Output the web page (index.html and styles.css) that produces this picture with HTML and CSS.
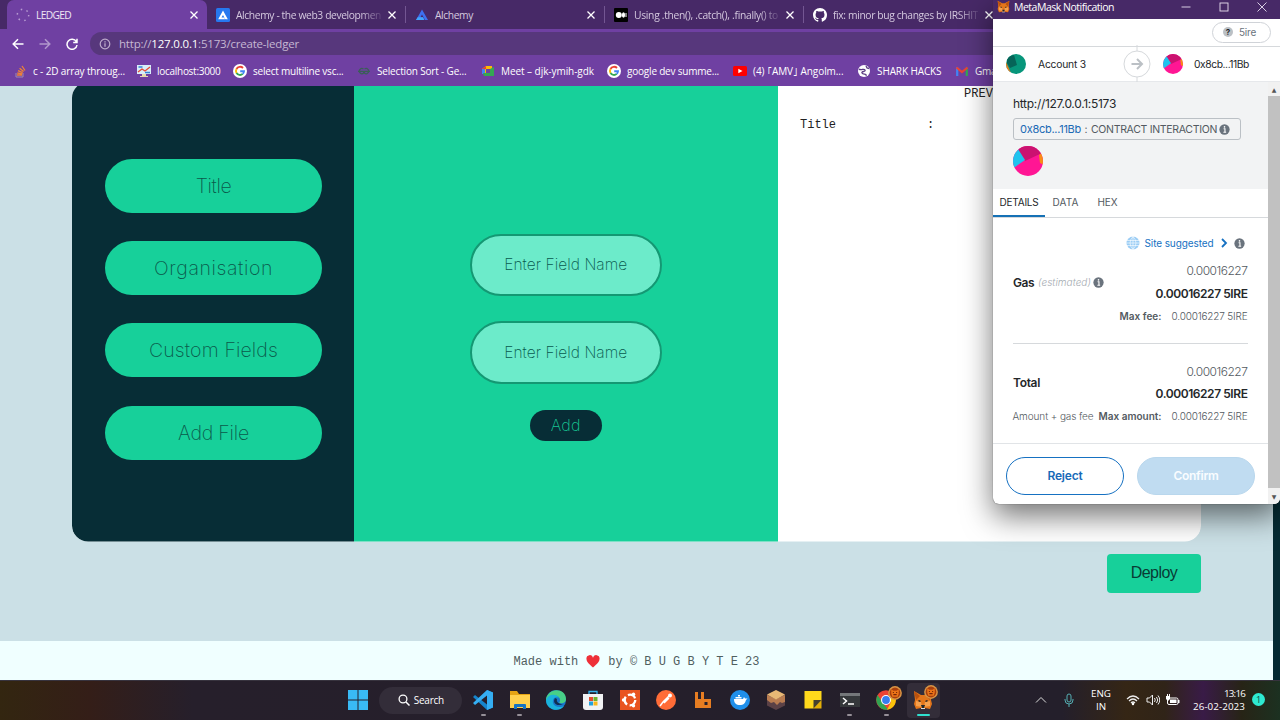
FILE: index.html
```html
<!DOCTYPE html>
<html lang="en">
<head>
<meta charset="utf-8">
<title>LEDGED</title>
<link rel="stylesheet" href="styles.css">
</head>
<body>
<svg class="defs" width="0" height="0">
  <symbol id="x" viewBox="0 0 10 10"><path d="M1.500 1.500l7 7M8.500 1.500l-7 7" stroke="currentColor" stroke-width="1.300"/></symbol>
  <symbol id="info" viewBox="0 0 12 12"><circle cx="6" cy="6" r="5.600" fill="#6a737d"/><path d="M5 5.200h1.500V9M4.800 9h3" stroke="#fff" stroke-width="1.200" fill="none"/><circle cx="6" cy="3.200" r=".9" fill="#fff"/></symbol>
  <symbol id="google" viewBox="0 0 14 14"><circle cx="7" cy="7" r="7" fill="#fff"/><g fill="none" stroke-width="1.900"><path d="M10 4A4.100 4.100 0 0 0 3.500 5" stroke="#ea4335"/><path d="M3.500 5a4.200 4.200 0 0 0 0 4.100" stroke="#fbbc05"/><path d="M3.500 9a4.100 4.100 0 0 0 6.200.9" stroke="#34a853"/><path d="M9.700 9.900A4 4 0 0 0 11 7.200H7.200" stroke="#4285f4"/></g></symbol>
  <symbol id="jazz" viewBox="0 0 30 30"><clipPath id="c"><circle cx="15" cy="15" r="15"/></clipPath><g clip-path="url(#c)"><path fill="#ff1694" d="M0 0h30v30H0z"/><path fill="#cb1270" d="M3 0h26v7L12 15 5 5z"/><path fill="#1fc3ee" d="M0 3h5l7 11-10 7-4 1z"/><path fill="#f98b15" d="M26 9l5-4v14l-4-2z"/></g></symbol>
  <symbol id="fox" viewBox="0 0 20 20"><path fill="#e4761b" d="M1 1l7 4h4l7-4-1 9 1 4-2 5-5-1H8l-5 1-2-5 1-4z"/><path fill="#f6a04d" d="M3 11l5 1 1 5-6-1zM17 11l-5 1-1 5 6-1z"/><path fill="#b9510e" d="M1 1l6 5-4 4zM19 1l-6 5 4 4z"/><path fill="#24272a" d="M8 15h4l-1 3H9zM5 11l2 1 1-1-2-1zM15 11l-2 1-1-1 2-1z"/><path fill="#ddd" d="M8 18h4v1H8z"/></symbol>
  <symbol id="badge" viewBox="0 0 13 13"><circle cx="6.500" cy="6.500" r="6.400" fill="#d99445"/><circle cx="6.500" cy="6.500" r="5" fill="#a93f0d"/><path d="M3 3l2 1.500h3L10 3v4l-1 3H4L3 7z" fill="#ec7418"/><path d="M5 8h3M4.500 6h1M7.500 6h1" stroke="#70250b"/></symbol>
</svg>

<div class="desktop">
  <header class="browser">
    <div class="tabs">
      <div class="tab active"><svg class="fav" viewBox="0 0 14 14"><circle cx="7" cy="7" r="5.700" fill="none" stroke="#b79bd1" stroke-width="1.500" stroke-dasharray="1.500 4.470"/></svg><span class="tab-name"><span data-w="35">LEDGED</span></span><svg class="close"><use href="#x"/></svg></div>
      <div class="tab"><svg class="fav" viewBox="0 0 14 14"><rect width="14" height="14" rx="1.500" fill="#2678ef"/><path d="M7 2.500l4.800 8.700H9.300L7 7 5.500 9.500h2.700L9 11.200H2.200z" fill="#fff"/></svg><span class="tab-name fade"><span data-w="145">Alchemy - the web3 developmen</span></span><svg class="close"><use href="#x"/></svg></div>
      <div class="tab"><svg class="fav" viewBox="0 0 14 14"><path d="M7 1.500l6 10.500h-3L7 6.500 5.500 9.300H8L9.300 12H1z" fill="#3e70f0"/><path d="M1 12l1.700-2.700H8L9.300 12z" fill="#42a5fb"/></svg><span class="tab-name"><span data-w="38">Alchemy</span></span><svg class="close"><use href="#x"/></svg></div>
      <div class="tab"><svg class="fav" viewBox="0 0 14 14"><rect width="14" height="14" rx="1" fill="#000"/><circle cx="4.800" cy="7" r="3" fill="#fff"/><ellipse cx="9.500" cy="7" rx="1.600" ry="2.700" fill="#fff"/><rect x="11.500" y="5" width="1" height="4" fill="#fff"/></svg><span class="tab-name fade"><span data-w="144">Using .then(), .catch(), .finally() to</span></span><svg class="close"><use href="#x"/></svg></div>
      <div class="tab"><svg class="fav" viewBox="0 0 16 16"><path fill="#fff" d="M8 0C3.580 0 0 3.580 0 8c0 3.540 2.290 6.530 5.470 7.590.4.070.55-.17.55-.38v-1.490c-2.010.37-2.530-.49-2.690-.94-.09-.23-.48-.94-.82-1.130-.28-.15-.68-.52-.01-.53.63-.01 1.080.58 1.230.82.72 1.210 1.870.87 2.330.66.07-.52.28-.87.51-1.070-1.780-.2-3.640-.89-3.640-3.950 0-.87.31-1.590.82-2.150-.08-.2-.36-1.020.08-2.120 0 0 .67-.21 2.200.82a7.700 7.700 0 0 1 4 0c1.530-1.040 2.200-.82 2.200-.82.44 1.100.16 1.920.08 2.120.51.56.82 1.270.82 2.150 0 3.070-1.870 3.750-3.650 3.950.29.25.54.73.54 1.480v2.190c0 .21.15.46.55.38A8 8 0 0 0 16 8c0-4.420-3.580-8-8-8z"/></svg><span class="tab-name fade"><span data-w="145">fix: minor bug changes by IRSHIT</span></span><svg class="close"><use href="#x"/></svg></div>
    </div>
    <div class="toolbar">
      <svg class="nav" viewBox="0 0 12 12"><path d="M11.500 6H1.500M6 1.200L1.200 6 6 10.800"/></svg>
      <svg class="nav dim" viewBox="0 0 12 12"><path d="M.5 6h10M6 1.200L10.800 6 6 10.800"/></svg>
      <svg class="nav" viewBox="0 0 12 12"><path d="M10.300 3.700A5 5 0 1 0 11 7M11 .7v3.800H7.200"/></svg>
      <div class="omnibox"><svg viewBox="0 0 12 12"><circle cx="6" cy="6" r="4.800" fill="none" stroke="#bdaacb" stroke-width="1.200"/><path d="M6 5.300v3.400M6 3.200v1.300" stroke="#bdaacb" stroke-width="1.300"/></svg><span class="url" data-w="180">http://<b>127.0.0.1</b>:5173/create-ledger</span></div>
    </div>
    <nav class="bookmarks">
      <div class="bm w123"><svg viewBox="0 0 14 14"><path d="M3 9v4h7V9" fill="none" stroke="#a18aae"/><path d="M4 11h5M4.300 9l5 .8M5 6.700l4.700 2M6.600 4.300l4 3.300M9 2l3 4.500" stroke="#ef8236" stroke-width="1.300"/></svg><span data-w="92">c - 2D array throug...</span></div>
      <div class="bm w96"><svg viewBox="0 0 14 14"><path d="M0 1h14v9H0z" fill="#d9eef9"/><path d="M1 8l4-3 3 2 5-4" stroke="#e34c35" stroke-width="1.300" fill="none"/><path d="M1.500 3h4M8 8.500h5" stroke="#3285d7" stroke-width="1.600"/><path d="M5 10h4v2H5zM3 12h8v1H3z" fill="#e5dcae"/></svg><span data-w="63.500">localhost:3000</span></div>
      <div class="bm w124"><svg><use href="#google"/></svg><span data-w="90.500">select multiline vsc...</span></div>
      <div class="bm w124"><svg viewBox="0 0 14 14"><path d="M6.500 5A2.600 2.600 0 1 0 6.500 9.200V7.300H1M7.500 5a2.600 2.600 0 1 1 0 4.200V7.300H13" fill="none" stroke="#3b5e58" stroke-width="1.300"/></svg><span data-w="89.500">Selection Sort - Ge...</span></div>
      <div class="bm w126"><svg viewBox="0 0 14 14"><path d="M1 5l4-3h6v3H5v5H1z" fill="#fbbc05"/><path d="M1 5l4-3v3z" fill="#ea4335"/><path d="M1 5h3v5H1z" fill="#4285f4"/><path d="M2 9h7V5l4-2v9H3z" fill="#34a853"/></svg><span data-w="93">Meet – djk-ymih-gdk</span></div>
      <div class="bm w126"><svg><use href="#google"/></svg><span data-w="92">google dev summe...</span></div>
      <div class="bm w124"><svg viewBox="0 0 14 14"><rect y="2" width="14" height="10" rx="1.500" fill="#f00"/><path d="M5.300 4.700v4.600L9.500 7z" fill="#fff"/></svg><span data-w="90.500">(4) ｢AMV｣ Angolm...</span></div>
      <div class="bm w98"><svg viewBox="0 0 14 14"><circle cx="7" cy="7" r="6" fill="#fff"/><path d="M2 5c2 2 5-1 6 1s-4 1-3 3 5 0 4 3" fill="none" stroke="#5c3c83" stroke-width="1.300"/><path d="M9 2l1 2 2 .5" stroke="#5c3c83" stroke-width="1.300" fill="none"/></svg><span data-w="64.500">SHARK HACKS</span></div>
      <div class="bm"><svg viewBox="0 0 14 14"><path d="M2.200 12V3.500" stroke="#4285f4" stroke-width="2.200"/><path d="M11.800 12V3.500" stroke="#34a853" stroke-width="2.200"/><path d="M1.500 3.500L7 8l5.500-4.500" fill="none" stroke="#ea4335" stroke-width="2.200"/></svg><span data-w="26">Gmail</span></div>
    </nav>
  </header>

  <main class="viewport">
    <div class="page">
      <section class="builder">
        <aside class="sidebar">
          <button><span data-w="35.500">Title</span></button>
          <button><span data-w="119">Organisation</span></button>
          <button><span data-w="129">Custom Fields</span></button>
          <button><span data-w="71">Add File</span></button>
        </aside>
        <div class="fields">
          <div class="field"><span data-w="123">Enter Field Name</span></div>
          <div class="field"><span data-w="123">Enter Field Name</span></div>
          <button class="add"><span data-w="30">Add</span></button>
        </div>
        <div class="preview">
          <h2>PREVIEW</h2>
          <div class="row"><span>Title</span><span>:</span></div>
        </div>
      </section>
      <div class="actions"><button class="deploy"><span data-w="46.500">Deploy</span></button></div>
      <footer class="credit"><span>Made with</span><svg viewBox="0 0 14 13"><path d="M7 12.500C3 9 .5 7 .5 4A3.300 3.300 0 0 1 7 2.800 3.300 3.300 0 0 1 13.500 4c0 3-2.500 5-6.500 8.500z" fill="#ee3038"/></svg><span>by © B U G B Y T E 23</span></footer>
    </div>
    <div class="page-scroll"></div>
  </main>

  <footer class="taskbar">
    <div class="dock">
      <div class="task"><svg viewBox="0 0 20 20"><path fill="#39baf5" d="M0 0h9.500v9.500H0zM10.500 0H20v9.500h-9.500zM0 10.500h9.500V20H0zM10.500 10.500H20V20h-9.500z"/></svg></div>
      <div class="search"><svg viewBox="0 0 12 12"><circle cx="5" cy="5" r="3.900" fill="none" stroke="#fff" stroke-width="1.300"/><path d="M8 8l3.500 3.500" stroke="#fff" stroke-width="1.500"/></svg><span data-w="30">Search</span></div>
      <div class="task run"><svg viewBox="0 0 20 20"><path fill="#1685cc" d="M14 0l6 2.500v15L14 20 0 7l2-2 12 9.500z"/><path fill="#35aef3" d="M14 0l6 2.500v15L14 20V5.500L2 15l-2-2z"/></svg></div>
      <div class="task run"><svg viewBox="0 0 20 20"><path fill="#e5a313" d="M0 1h7l2 3h11v3H0z"/><path fill="#ffd04d" d="M0 5h20v13H0z"/><path fill="#1673c2" d="M4 19v-4q0-1 1-1h10q1 0 1 1v4h-3v-2H7v2z"/></svg></div>
      <div class="task"><svg viewBox="0 0 20 20"><circle cx="10" cy="10" r="10" fill="#1878cb"/><path fill="#48cf87" d="M2 4.500C8-3 20 0 20 9c0 4-4 5-7 4 3-4-1-8-5-7-4 0-7 3-8 5 0-3 0-4 2-6.500z"/><path fill="#1ab2dc" d="M0 10c2-6 10-7 13-2-4-2-7 1-6 5 1 4 7 5 11 3-5 7-18 4-18-6z"/><path fill="#102f50" d="M9 8c-3 5 2 9 8 6-4 0-7-2-6-5z"/></svg></div>
      <div class="task"><svg viewBox="0 0 20 20"><path d="M6 5V1.500h8V5" fill="none" stroke="#35b3ee" stroke-width="1.300"/><path fill="#f1f2f4" d="M0 4h20v13q0 3-3 3H3q-3 0-3-3z"/><path fill="#e34b2f" d="M6 7h4v4H6z"/><path fill="#68b32e" d="M10.500 7h4v4h-4z"/><path fill="#21a1dd" d="M6 11.500h4v4H6z"/><path fill="#f8b81c" d="M10.500 11.500h4v4h-4z"/></svg></div>
      <div class="task"><svg viewBox="0 0 20 20"><path fill="#e95420" d="M0 0h20v20H0z"/><circle cx="10" cy="10" r="5.300" fill="none" stroke="#fff" stroke-width="2.300" stroke-dasharray="8.500 2.600"/><circle cx="3.500" cy="10" r="1.700" fill="#fff"/><circle cx="13.500" cy="4.200" r="1.700" fill="#fff"/><circle cx="13.500" cy="15.800" r="1.700" fill="#fff"/></svg></div>
      <div class="task"><svg viewBox="0 0 20 20"><circle cx="10" cy="10" r="10" fill="#ff6c37"/><path d="M4 16l3-4 6-6M8 13l5-5" stroke="#fff" stroke-width="1.500"/><circle cx="14" cy="5.500" r="2" fill="#fff"/></svg></div>
      <div class="task"><svg viewBox="0 0 20 20"><path fill="#e67d22" d="M2 2h3v7h3V2h3v7h7v9H2z"/><path fill="#241f2b" d="M11.500 12h3v3h-3z"/></svg></div>
      <div class="task"><svg viewBox="0 0 20 20"><circle cx="10" cy="10" r="10" fill="#1f8fea"/><path fill="#fff" d="M4 9h9l1-2 1 1.500h2.500L16 10c-1 4-3 5-6 5-4 0-6-2-6-6zM5.500 7h6v1.500h-6zM8 5h2v1.500H8z"/></svg></div>
      <div class="task"><svg viewBox="0 0 20 20"><path fill="#5b4146" d="M1 5h18v10.500L10 20l-9-4.500z"/><path fill="#b97c50" d="M1 5l9 4 9-4v7l-3 1-2-1-3 3-3-3-3 1-4-3z"/><path fill="#e8b875" d="M10 0l9 4.500-9 5-9-5z"/></svg></div>
      <div class="task"><svg viewBox="0 0 20 20"><path fill="#ffd91c" d="M1.500 1h17v9l-8 8.500h-9z"/><path fill="#45412e" d="M10.500 18.500V10h8z"/><path fill="#e3af08" d="M10.500 18.500l8-8.500v8.500z"/></svg></div>
      <div class="task run"><svg viewBox="0 0 20 20"><path fill="#35383b" d="M0 3h20v14H0z"/><path fill="#74777a" d="M0 3h20v3H0z"/><path d="M3 8l3.500 3L3 14M8 14h6" fill="none" stroke="#fff" stroke-width="1.500"/></svg></div>
      <div class="task run"><svg viewBox="0 0 20 20"><circle cx="10" cy="10" r="9.800" fill="#eb4335"/><path fill="#31a451" d="M1.500 5l5.500 8 5 6.500A10 10 0 0 1 1.500 5z"/><path fill="#fac30b" d="M10 6h9a9.800 9.800 0 0 1-8 13.800L15 12z"/><circle cx="10" cy="10" r="5" fill="#fff"/><circle cx="10" cy="10" r="3.900" fill="#367df0"/></svg><svg class="badge"><use href="#badge"/></svg></div>
      <div class="task run current"><svg><use href="#fox"/></svg><svg class="badge"><use href="#badge"/></svg></div>
    </div>
    <div class="tray">
      <svg class="up" viewBox="0 0 12 8"><path d="M1 6.500l5-5 5 5" fill="none" stroke="#ddd"/></svg>
      <svg class="mic" viewBox="0 0 10 14"><rect x="3" y="1" width="4" height="8" rx="2" fill="none" stroke="#55aeb3"/><path d="M1 6v1q0 4 4 4t4-4V6M5 11v3" fill="none" stroke="#55aeb3"/></svg>
      <div class="lang"><span data-w="20">ENG</span><span>IN</span></div>
      <svg class="wifi" viewBox="0 0 14 12"><g fill="none" stroke="#eee" stroke-width="1.200"><path d="M1 5q6-6 12 0M3 7q4-4 8 0M5 9q2-2 4 0"/></g><circle cx="7" cy="10" r="1.200" fill="#fff"/></svg>
      <svg class="vol" viewBox="0 0 14 12"><g fill="none" stroke="#eee"><path d="M1 4h2.500L6.500 1v10l-3-3H1zM8.500 4q1.500 2 0 4M10.500 3q2.500 3 0 6M12 1.500q3.500 4.500 0 9"/></g></svg>
      <svg class="bat" viewBox="0 0 14 12"><rect x="1.500" y="4" width="10.500" height="6.500" rx="1.500" fill="none" stroke="#fff"/><path fill="#fff" d="M4 5.500h6.500V9H4zM12 6h1.500v3H12zM0 2h4v3L2 7 0 5zM1 0h1v2H1zM3 0h1v2H3z"/></svg>
      <div class="clock"><span data-w="21">13:16</span><span data-w="52">26-02-2023</span></div>
      <span class="count">1</span>
    </div>
  </footer>

  <section class="wallet">
    <div class="w-title"><svg class="w-fox"><use href="#fox"/></svg><span class="w-name" data-w="100">MetaMask Notification</span><svg class="w-ctl" viewBox="0 0 10 10"><path d="M.5 5h9"/></svg><svg class="w-ctl" viewBox="0 0 10 10"><rect x="1" y="1" width="8" height="8"/></svg><svg class="w-ctl" viewBox="0 0 10 10"><path d="M.5.5l9 9M9.500.5l-9 9"/></svg></div>
    <div class="w-net"><div class="net"><i>?</i><span data-w="17">5ire</span></div></div>
    <div class="w-acc">
      <svg viewBox="0 0 20 20"><clipPath id="a"><circle cx="10" cy="10" r="10"/></clipPath><g clip-path="url(#a)"><path fill="#07967b" d="M0 0h20v20H0z"/><path fill="#066458" d="M1 3l7-2 3 10-7 3-3-5z"/><path fill="#f07b1b" d="M0 8l5 11-5 1z"/></g></svg>
      <span class="from"><span data-w="48">Account 3</span></span>
      <svg class="arrow" viewBox="0 0 28 38"><path d="M14 0v38" stroke="#d6d9dc"/><circle cx="14" cy="19" r="13" fill="#fff" stroke="#d6d9dc"/><path d="M8.500 19h10M14 14l5 5-5 5" fill="none" stroke="#bbc0c5" stroke-width="2"/></svg>
      <svg><use href="#jazz"/></svg>
      <span class="to"><span data-w="55">0x8cb...11Bb</span></span>
    </div>
    <div class="w-main">
      <div class="w-content">
        <div class="summary">
          <div class="origin"><span data-w="103">http://127.0.0.1:5173</span></div>
          <div class="action"><em data-w="61">0x8cb...11Bb</em><b>:</b><span data-w="126">CONTRACT INTERACTION</span><svg><use href="#info"/></svg></div>
          <svg class="ident"><use href="#jazz"/></svg>
        </div>
        <div class="w-tabs"><div class="on"><span data-w="39">DETAILS</span></div><div><span data-w="26">DATA</span></div><div><span data-w="20">HEX</span></div></div>
        <div class="details">
          <div class="suggest"><svg class="globe" viewBox="0 0 14 14"><circle cx="7" cy="7" r="6.500" fill="#9bcdf5"/><path d="M1 4.500h12M.5 7h13M1 9.500h12M7 0v14M7 .5q-6 6.500 0 13M7 .5q6 6.500 0 13" fill="none" stroke="#fff" stroke-width=".6"/></svg><span data-w="69">Site suggested</span><svg class="chev" viewBox="0 0 8 10"><path d="M2 1l4 4-4 4" fill="none" stroke="#1671c2" stroke-width="1.800"/></svg><svg class="inf"><use href="#info"/></svg></div>
          <div class="fee gas">
            <div class="val"><span data-w="61">0.00016227</span></div>
            <div class="mid"><strong data-w="21">Gas</strong><i data-w="53">(estimated)</i><svg class="inf"><use href="#info"/></svg><strong class="end" data-w="92">0.00016227 5IRE</strong></div>
            <div class="max"><b data-w="42">Max fee:</b><span data-w="76">0.00016227 5IRE</span></div>
          </div>
          <div class="fee total">
            <div class="val"><span data-w="61">0.00016227</span></div>
            <div class="mid"><strong data-w="27">Total</strong><strong class="end" data-w="92">0.00016227 5IRE</strong></div>
            <div class="max"><span class="note" data-w="81">Amount + gas fee</span><b data-w="63">Max amount:</b><span data-w="76">0.00016227 5IRE</span></div>
          </div>
        </div>
        <div class="w-foot"><button><span data-w="35">Reject</span></button><button class="confirm"><span data-w="45">Confirm</span></button></div>
      </div>
      <div class="w-scroll"><span>▲</span><div></div><span>▼</span></div>
    </div>
  </section>
</div>
<script src="fit.js"></script>
</body>
</html>
```

FILE: styles.css
```css
* { box-sizing: border-box; }
body { margin: 0; overflow: hidden; font-family: "Open Sans", "Noto Sans", sans-serif; }
button { font: inherit; border: 0; padding: 0; margin: 0; }
svg { display: block; flex: none; }
.defs { position: absolute; }
[data-w] { display: inline-block; white-space: nowrap; flex: none; }
.desktop { position: relative; width: 1280px; height: 720px; display: flex; flex-direction: column; overflow: hidden; }

/* Browser chrome */
.browser { height: 86px; background: #6f40a2; color: #fff; flex: none; }
.tabs { height: 29px; background: #472967; display: flex; padding-left: 7px; }
.tab { width: 199px; flex: none; display: flex; align-items: center; padding: 0 8px 0 9px; font-size: 10.3px; color: #d5c9df; border-right: 1px solid #735692; background-clip: padding-box; height: 17px; margin-top: 6px; }
.tab.active { width: 200px; height: 29px; margin: 0; background: #6f40a2; border: 0; border-radius: 7px 7px 0 0; color: #eee6f4; }
.fav { width: 14px; height: 14px; margin-right: 6px; }
.tab-name { flex: 1; overflow: hidden; white-space: nowrap; margin-right: 6px; }
.fade { mask-image: linear-gradient(90deg, #000 86%, rgba(0,0,0,.15) 100%); }
.close { width: 10px; height: 10px; color: #fff; }
.toolbar { height: 27px; display: flex; align-items: center; padding: 3px 0 1px 12px; gap: 15px; }
.nav { width: 12px; height: 12px; fill: none; stroke: #fff; stroke-width: 1.5; }
.dim { opacity: .45; }
.omnibox { height: 23px; flex: 1; margin-left: -3px; background: #57377c; border-radius: 12px 0 0 12px; display: flex; align-items: center; gap: 8px; padding-left: 9px; }
.omnibox svg { width: 12px; height: 12px; }
.url { font-size: 11.5px; color: #c6b7d3; }
.url b { font-weight: 400; color: #fff; }
.bookmarks { height: 30px; display: flex; align-items: center; padding: 0 0 1px 13px; font-size: 10px; }
.bm { display: flex; align-items: center; gap: 6px; flex: none; }
.bm svg { width: 14px; height: 14px; }
.w123 { width: 124px; } .w96 { width: 96px; } .w124 { width: 124px; } .w126 { width: 126px; } .w98 { width: 98px; }

/* Ledger page */
.viewport { height: 594px; display: flex; flex: none; }
.page { width: 1273px; background: #cbe0e6; display: flex; flex-direction: column; }
.page-scroll { flex: 1; background: #052b33; }
.builder { margin: -4px 72px 0; height: 459.500px; display: grid; grid-template-columns: 282px 423.5px 1fr; border-radius: 16px; overflow: hidden; clip-path: inset(4px 0 0 0 round 0 0 16px 16px); background: #fff; flex: none; }
.sidebar { background: #072d36; padding: 77px 0 0 33px; display: flex; flex-direction: column; gap: 28.200px; }
.sidebar button { width: 217px; height: 54px; border-radius: 27px; background: #17d09a; color: #0b594b; font: 200 19.5px Inter, Lato, sans-serif; }
.fields { background: #17d09a; display: flex; flex-direction: column; align-items: center; padding-top: 151.500px; font: 200 15.5px Inter, Lato, sans-serif; color: #07584d; }
.field { width: 192px; height: 62.500px; border: 2px solid #149873; border-radius: 32px; background: #6cebca; display: flex; align-items: center; justify-content: center; margin-bottom: 25px; }
.add { width: 72px; height: 31px; border-radius: 16px; background: #072d36; color: #17c794; font: 200 16px Inter, Lato, sans-serif; margin-top: 1px; padding-bottom: 1px; }
.preview { font: 12px "Liberation Mono", monospace; padding: 5px 22.500px; color: #222; }
.preview h2 { font: inherit; text-align: center; margin: 0 0 17px; line-height: 14px; }
.row { display: grid; grid-template-columns: 127px 1fr; line-height: 14px; }
.actions { display: flex; justify-content: flex-end; padding: 12px 72px 0 0; height: 99.500px; flex: none; }
.deploy { width: 94px; height: 39px; border-radius: 4px; background: #17d09a; color: #093c35; font: 16px "Liberation Sans", sans-serif; padding-bottom: 1px; }
.credit { flex: 1; background: #f0ffff; display: flex; align-items: center; justify-content: center; font: 12px "Liberation Mono", monospace; color: #50605f; gap: 8px; padding-top: 2px; white-space: pre; }
.credit svg { width: 14px; height: 13px; }

/* Taskbar */
.taskbar { height: 40px; flex: none; display: flex; justify-content: space-between; color: #fff; border-top: 1px solid #37333e; background: linear-gradient(90deg, #332610 0, #341e18 7%, #261f2b 15%, #241f2b 83%, #352615 88%, #302418 91%, #391b47 94%, #272416 97%, #1c3121 100%); }
.dock { display: flex; padding-left: 339.200px; align-items: center; }
.task { width: 36.650px; height: 40px; position: relative; display: flex; align-items: center; justify-content: center; padding-bottom: 2px; }
.task svg { width: 20px; height: 20px; }
.run::after { content: ""; position: absolute; width: 5px; height: 2px; border-radius: 1px; background: #969098; bottom: 5px; left: 16px; }
.current { background: #332d39; width: 33px; height: 35px; border-radius: 4px; margin-left: 2px; }
.current::after { width: 13px; background: #30e0d0; left: 10px; bottom: 2px; }
.task .badge { position: absolute; width: 14px; height: 14px; right: 3px; top: 5px; }
.current .badge { top: 2px; right: 2px; }
.search { width: 83px; height: 27px; border-radius: 14px; background: #332d39; display: flex; align-items: center; gap: 4px; padding-left: 19px; margin: 0 3px 1px; font-size: 10px; }
.search svg { width: 12px; height: 12px; }
.tray { display: flex; align-items: center; padding: 0 15px 2px 0; font-size: 9.8px; line-height: 13px; }
.up { width: 12px; height: 8px; margin-right: 17px; }
.mic { width: 10px; height: 14px; margin-right: 17px; }
.lang { width: 20px; text-align: center; margin-right: 15px; }
.wifi, .vol, .bat { width: 14px; height: 12px; margin-right: 6px; }
.bat { margin-right: 13px; }
.clock { display: flex; flex-direction: column; align-items: flex-end; margin-right: 7px; }
.count { width: 13px; height: 13px; border-radius: 50%; background: #2eead1; color: #15463e; font-size: 9px; text-align: center; }

/* Wallet popup window */
.wallet { position: absolute; left: 993px; top: 0; width: 287px; height: 504px; background: #fff; border-radius: 0 0 6px 6px; box-shadow: 0 12px 30px rgba(0,0,0,.55), 0 0 1px #333; display: flex; flex-direction: column; overflow: hidden; font-family: Inter, Lato, sans-serif; color: #24272a; }
.w-title { height: 19px; background: #472967; color: #fff; display: flex; align-items: center; padding: 0 13px 6px 4px; font: 10.5px "Open Sans", sans-serif; flex: none; }
.w-fox { width: 13px; height: 13px; margin-right: 4px; }
.w-name { margin-right: 67px; }
.w-ctl { width: 10px; height: 10px; margin-right: 28px; fill: none; stroke: #e8dff0; stroke-width: .9; }
.w-ctl:last-child { margin: 0; }
.w-net { height: 27.500px; border-bottom: 1px solid #d6d9dc; display: flex; justify-content: flex-end; align-items: center; padding-right: 9px; flex: none; }
.net { width: 59px; height: 21px; border: 1px solid #d0d3d8; border-radius: 11px; display: flex; align-items: center; padding-left: 10px; gap: 6px; font-size: 10px; color: #6a737d; }
.net i { width: 10px; height: 10px; border-radius: 50%; background: #bbc0c5; color: #24272a; font: bold 8px/10px Inter, sans-serif; text-align: center; }
.w-acc { height: 35.500px; display: flex; align-items: center; padding-left: 13px; font-size: 10.3px; flex: none; border-bottom: 1px solid #e6e8eb; }
.w-acc svg { width: 20px; height: 20px; }
.w-acc .arrow { width: 28px; height: 38px; margin-right: 12px; }
.from { width: 97px; padding: 1px 0 0 12px; }
.to { padding: 1px 0 0 11px; }
.w-main { flex: 1; display: flex; }
.w-content { width: 275px; display: flex; flex-direction: column; }
.summary { height: 107px; background: #f2f3f4; padding: 13px 20px 0; flex: none; }
.origin { font-size: 12px; line-height: 17px; height: 23px; }
.action { width: 228px; height: 22px; border: 1px solid #bbc0c5; border-radius: 3px; display: flex; align-items: center; padding-left: 6px; font-size: 10.5px; color: #535a61; }
.action em { font-style: normal; color: #1b6ab5; font-size: 11px; }
.action b { width: 10px; text-align: center; font-weight: 400; }
.action svg { width: 11px; height: 11px; margin-left: 2px; }
.ident { width: 30px; height: 30px; margin-top: 6px; }
.w-tabs { height: 29px; display: flex; border-bottom: 1px solid #d6d9dc; font-size: 10px; color: #535a61; flex: none; }
.w-tabs div { padding: 7px 6.500px 0; height: 28px; margin-right: 1px; }
.w-tabs div + div + div { margin-left: 5px; }
.w-tabs .on { width: 52px; border-bottom: 2px solid #1671b5; color: #24272a; }
.details { height: 226px; padding: 16px 20.500px 0 20px; flex: none; border-bottom: 1px solid #e1e4e7; }
.suggest { display: flex; justify-content: flex-end; align-items: center; height: 18px; padding-right: 3px; color: #1671c2; font-size: 10px; }
.globe { width: 14px; height: 14px; margin-right: 5px; }
.chev { width: 8px; height: 10px; margin: 0 6px; }
.inf { width: 11px; height: 11px; }
.fee { font-size: 12px; }
.val { text-align: right; height: 17px; line-height: 17px; color: #535a61; font-weight: 300; }
.gas .val { margin-top: 10px; }
.mid { display: flex; align-items: center; height: 18px; font-size: 12px; margin-top: 5px; }
.mid i { font-size: 10px; color: #a5abb1; font-weight: 300; margin: 0 2px 0 4px; }
.mid strong { font-weight: 600; }
.mid .end { margin-left: auto; }
.gas .mid > strong:first-child, .mid i, .mid .inf { transform: translateY(-11px); }
.total .mid > strong:first-child { transform: translateY(-11px); }
.max { display: flex; justify-content: flex-end; align-items: center; height: 17px; font-size: 10px; margin-top: 5px; color: #535a61; }
.max b { font-weight: 600; margin-right: 10px; }
.max span { font-weight: 300; }
.max .note { margin-right: 5px; }
.total { border-top: 1px solid #d6d9dc; margin-top: 19px; padding-top: 18.500px; }
.w-foot { flex: 1; display: flex; padding: 13px 13px 0; gap: 13px; }
.w-foot button { width: 118px; height: 38px; border: 1px solid #1671c2; border-radius: 19px; background: #fff; color: #176ab8; font: 600 12px Inter, sans-serif; padding-bottom: 1px; }
.w-foot .confirm { background: #c0dcf1; border-color: #b9d7ed; color: #f9fcff; }
.w-scroll { width: 12px; background: #f1f1f1; display: flex; flex-direction: column; align-items: center; }
.w-scroll span { height: 14px; font: 6px/16px "DejaVu Sans", sans-serif; color: #555; }
.w-scroll span:last-child { height: 16px; line-height: 18px; }
.w-scroll div { width: 12px; flex: 1; background: #c1c1c1; }
```

FILE: fit.js
```js
// Tracks each label so that it fills the width given in data-w.
document.querySelectorAll('[data-w]').forEach(function (el) {
  var target = parseFloat(el.dataset.w);
  var n = el.textContent.length;
  var natural = el.getBoundingClientRect().width;
  el.style.letterSpacing = ((target - natural) / n).toFixed(3) + 'px';
});
```
